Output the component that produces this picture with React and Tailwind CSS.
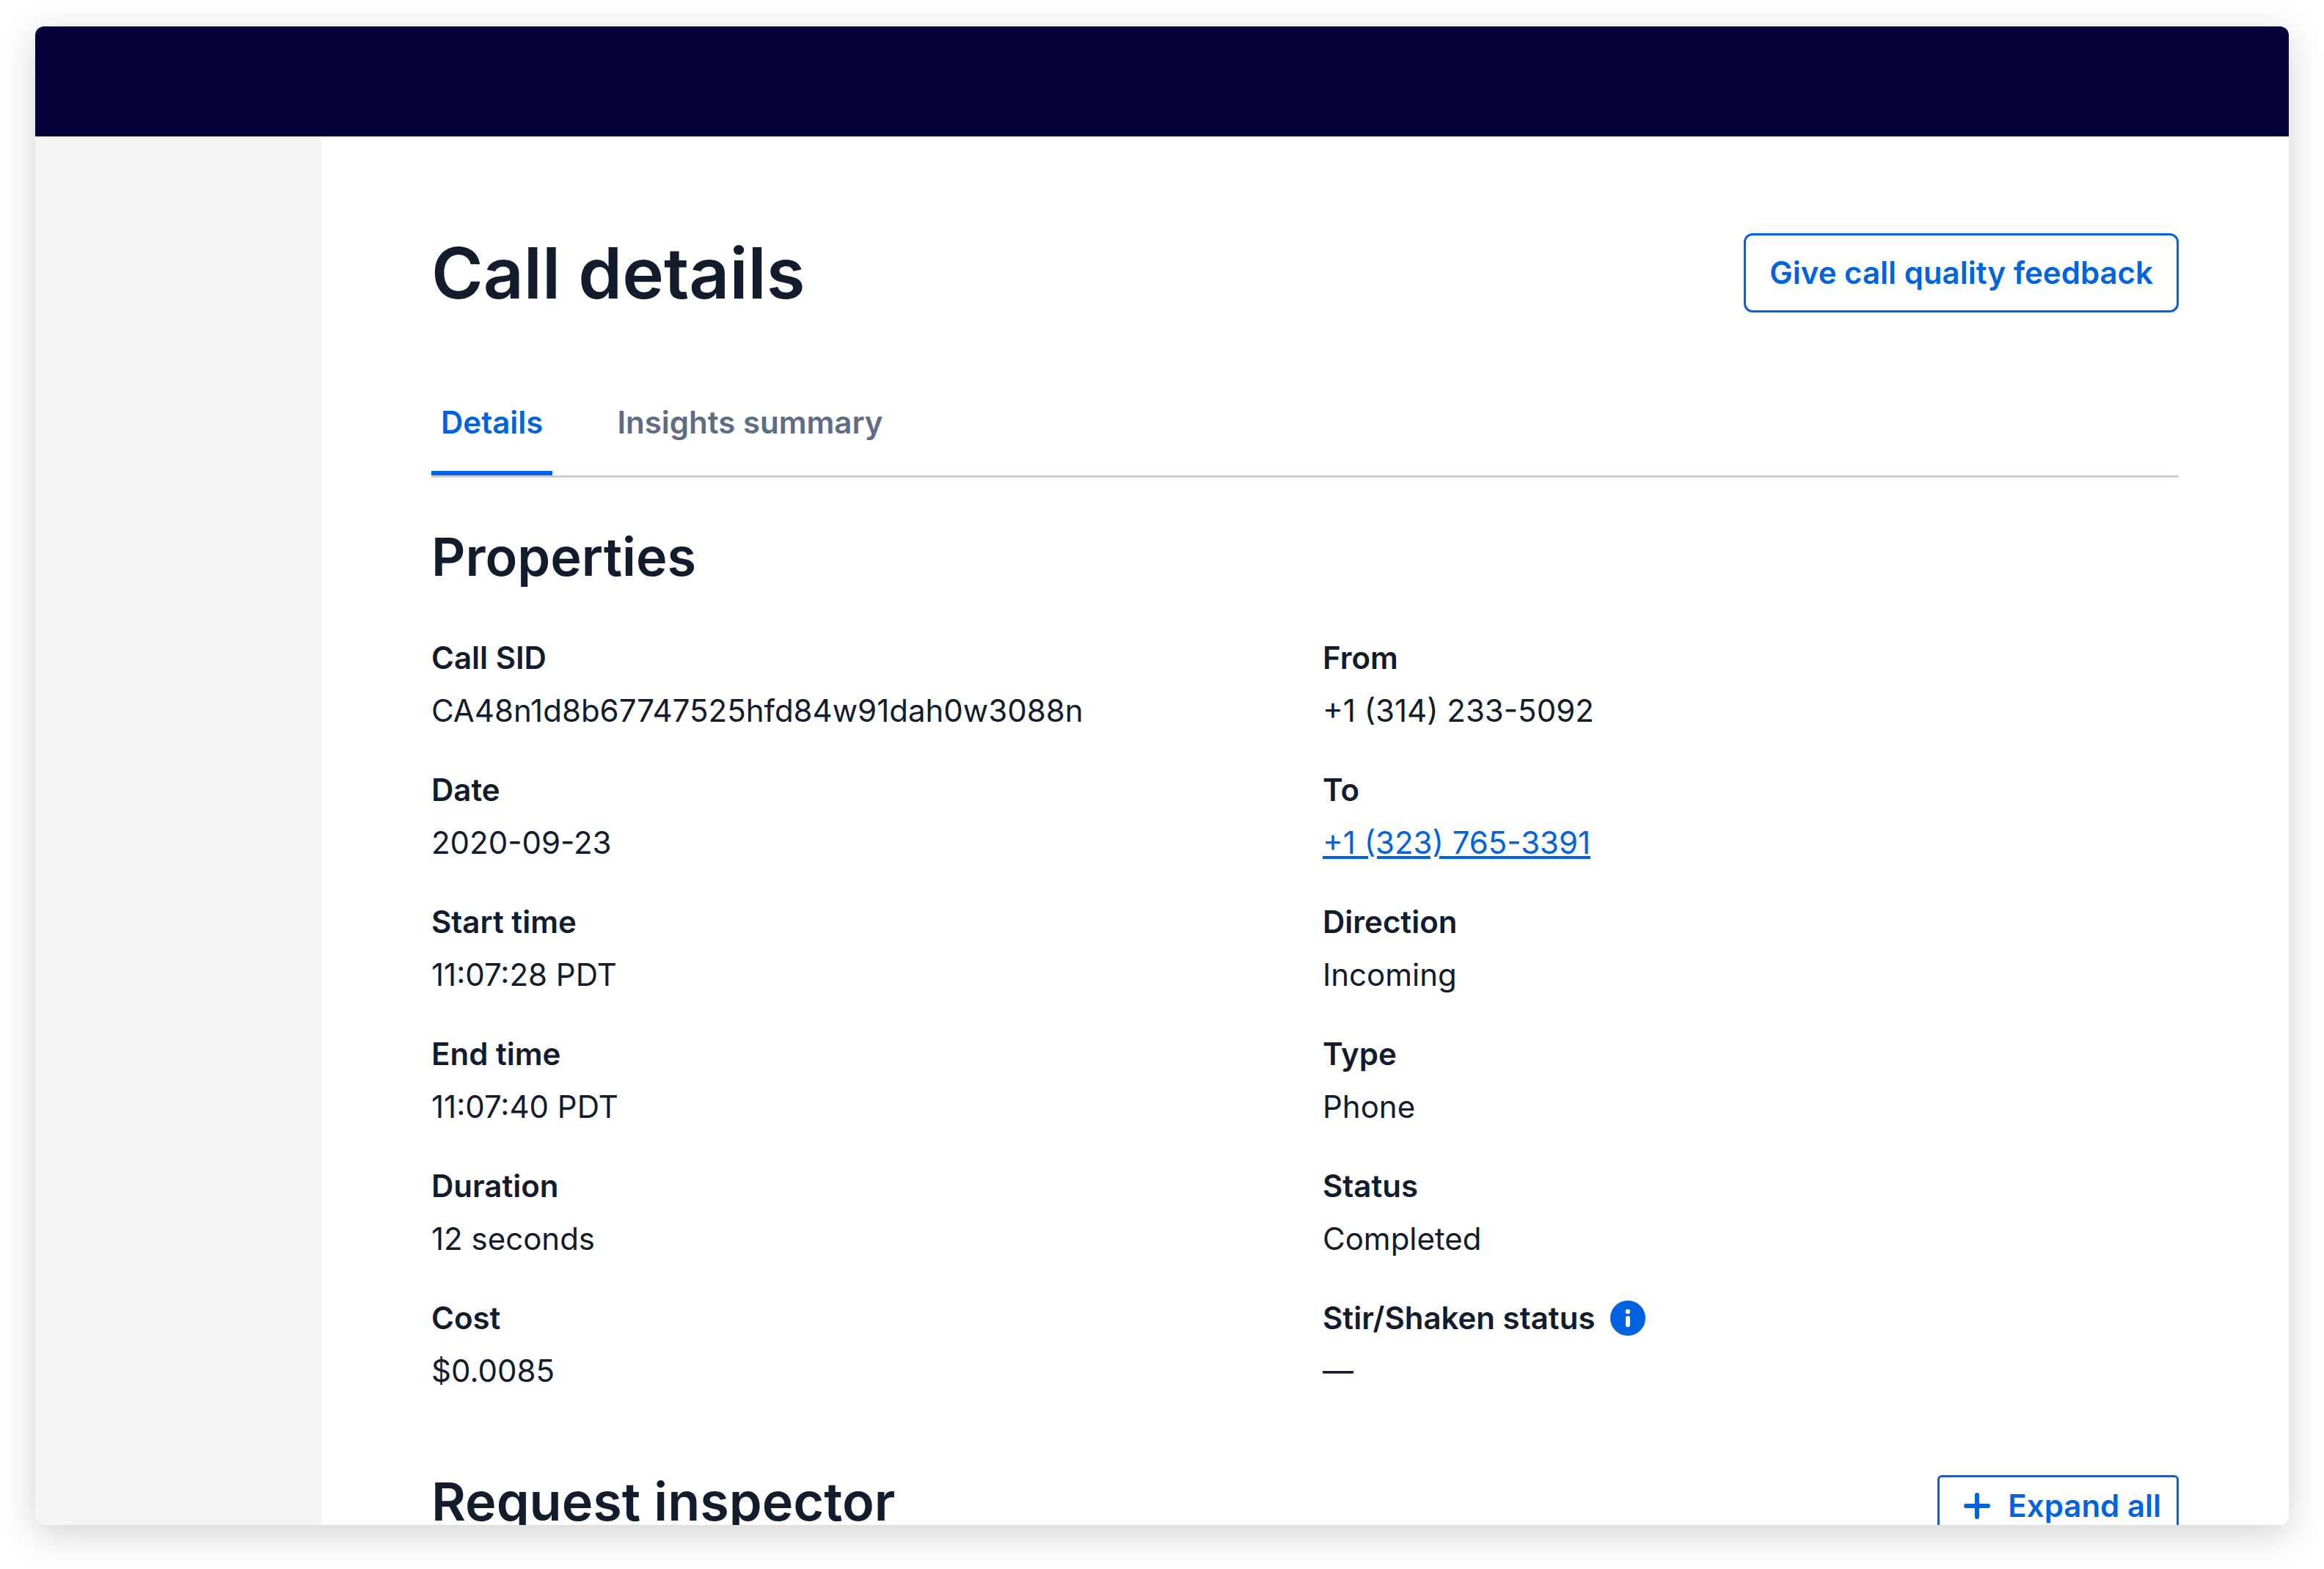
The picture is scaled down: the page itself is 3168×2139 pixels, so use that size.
const leftProperties = [
  { label: "Call SID", value: "CA48n1d8b67747525hfd84w91dah0w3088n" },
  { label: "Date", value: "2020-09-23" },
  { label: "Start time", value: "11:07:28 PDT" },
  { label: "End time", value: "11:07:40 PDT" },
  { label: "Duration", value: "12 seconds" },
  { label: "Cost", value: "$0.0085" },
];

const rightProperties = [
  { label: "From", value: "+1 (314) 233-5092" },
  { label: "To", value: "+1 (323) 765-3391", href: "#to" },
  { label: "Direction", value: "Incoming" },
  { label: "Type", value: "Phone" },
  { label: "Status", value: "Completed" },
  { label: "Stir/Shaken status", value: "—", info: true },
];

function InfoIcon() {
  return (
    <svg viewBox="0 0 48 48" className="size-12" aria-hidden="true">
      <circle cx="24" cy="24" r="24" fill="#0263E0" />
      <circle cx="24" cy="15" r="3.2" fill="#fff" />
      <rect x="21" y="21" width="6" height="15.2" rx="3" fill="#fff" />
    </svg>
  );
}

function PlusIcon() {
  return (
    <svg viewBox="0 0 60 60" className="size-15" aria-hidden="true">
      <path
        d="M30 15v30M15 30h30"
        fill="none"
        stroke="#0263E0"
        strokeWidth="6"
        strokeLinecap="round"
      />
    </svg>
  );
}

function PropertyList({ items }) {
  return (
    <dl className="flex min-w-0 flex-col gap-12">
      {items.map((item) => (
        <div key={item.label} className="flex flex-col gap-3">
          <dt className="flex items-center gap-[21px] font-semibold">
            {item.label}
            {item.info && (
              <button type="button" aria-label="About Stir/Shaken status">
                <InfoIcon />
              </button>
            )}
          </dt>
          <dd>
            {item.href ? (
              <a href={item.href} className="text-[#0263E0] underline">
                {item.value}
              </a>
            ) : (
              item.value
            )}
          </dd>
        </div>
      ))}
    </dl>
  );
}

export default function App() {
  return (
    <div className="h-screen bg-white px-12 pt-9 pb-15 font-['Inter',sans-serif] text-[42px] leading-[60px] text-[#121C2D]">
      <div className="flex h-full flex-col overflow-hidden rounded-xl bg-white shadow-[0_12px_48px_rgba(18,28,45,0.2)]">
        <header className="h-[150px] shrink-0 bg-[#06033A]" />
        <div className="flex min-h-0 flex-1">
          <aside className="w-[390px] shrink-0 bg-[#F4F4F6]" />
          <main className="min-w-0 flex-1 overflow-hidden px-[150px] pt-[126px]">
            <div className="flex items-center justify-between">
              <h1 className="text-[96px] leading-[120px] font-semibold">Call details</h1>
              <button
                type="button"
                className="rounded-xl border-3 border-[#0263E0] px-8 py-[21px] font-semibold text-[#0263E0]"
              >
                Give call quality feedback
              </button>
            </div>

            <div
              role="tablist"
              className="mt-[114px] flex gap-[75px] border-b-3 border-[#CACDD8] font-semibold"
            >
              <button
                type="button"
                role="tab"
                aria-selected="true"
                className="border-b-6 border-[#0263E0] px-[13px] pb-9 text-[#0263E0]"
              >
                Details
              </button>
              <button
                type="button"
                role="tab"
                aria-selected="false"
                className="border-b-6 border-transparent px-[13px] pb-9 text-[#606B85]"
              >
                Insights summary
              </button>
            </div>

            <section className="mt-15">
              <h2 className="text-[72px] leading-[96px] font-semibold">Properties</h2>
              <div className="mt-15 grid grid-cols-2 gap-12">
                <PropertyList items={leftProperties} />
                <PropertyList items={rightProperties} />
              </div>
            </section>

            <section className="mt-25 flex items-end justify-between">
              <h2 className="text-[72px] leading-[96px] font-semibold">Request inspector</h2>
              <button
                type="button"
                className="flex items-center gap-3 rounded-md border-3 border-[#0263E0] px-[21px] py-[9px] font-semibold text-[#0263E0]"
              >
                <PlusIcon />
                Expand all
              </button>
            </section>
          </main>
        </div>
      </div>
    </div>
  );
}
